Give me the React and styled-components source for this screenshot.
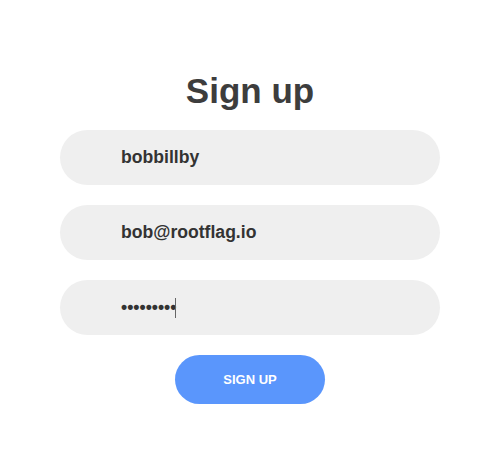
import { createGlobalStyle } from 'styled-components';
import styled from 'styled-components';

const GlobalStyle = createGlobalStyle`
  body {
    margin: 0;
    background: #ffffff;
    font-family: "Liberation Sans", Arial, sans-serif;
  }
`;

const SignUpBox = styled.form`
  display: flex;
  flex-direction: column;
  align-items: center;
  gap: 20px;
  padding: 69px 1px 0 0;
`;
const Title = styled.h1`
  margin: 0 0 -3px;
  font-size: 35px;
  line-height: 44px;
  font-weight: 700;
  color: #3d3d3d;
`;
const SignUpInput = styled.input`
  box-sizing: border-box;
  width: 380px;
  height: 55px;
  border: none;
  border-radius: 28px;
  background: #efefef;
  padding: 0 0 0 61px;
  font-family: "Liberation Sans", Arial, sans-serif;
  font-size: 17.6px;
  font-weight: 700;
  color: #333333;
  outline: none;
  caret-color: transparent;
`;
const Field = styled.div`
  position: relative;
  width: 380px;
  height: 55px;
`;
const Caret = styled.span`
  position: absolute;
  left: ${(p) => p.$left}px;
  top: 18px;
  width: 1px;
  height: 20px;
  background: #666666;
  pointer-events: none;
`;
const SignUpButton = styled.button`
  width: 150px;
  height: 49px;
  border: none;
  border-radius: 25px;
  background: #5a96fc;
  color: #ffffff;
  font-family: "Liberation Sans", Arial, sans-serif;
  font-size: 13px;
  font-weight: 700;
  cursor: pointer;
`;

function App() {
  return (
    <>
      <GlobalStyle />
      <SignUpBox onSubmit={(e) => e.preventDefault()}>
        <Title>Sign up</Title>
        <SignUpInput type="text" defaultValue="bobbillby" />
        <SignUpInput type="email" defaultValue="bob@rootflag.io" />
        <Field>
          <SignUpInput type="password" defaultValue="123456789" />
          <Caret $left={115} />
        </Field>
        <SignUpButton type="submit">SIGN UP</SignUpButton>
      </SignUpBox>
    </>
  );
}

export default App;
